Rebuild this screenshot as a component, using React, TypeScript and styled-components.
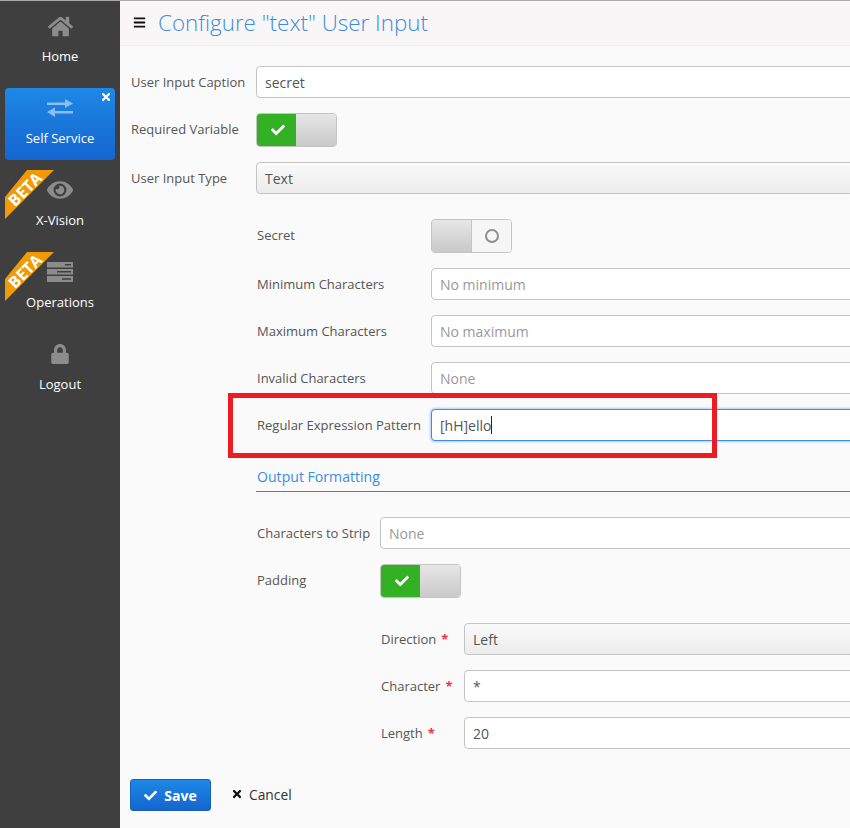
import React from "react";
import styled, { createGlobalStyle } from "styled-components";
import { FaHome, FaEye, FaLock, FaCheck, FaTimes, FaBars } from "react-icons/fa";

const Global = createGlobalStyle`
  html, body { margin: 0; padding: 0; height: 100%; }
  body { font-family: "Open Sans", "Liberation Sans", sans-serif; background: #fafafa; overflow: hidden; }
  * { box-sizing: border-box; }
`;

const Page = styled.div`
  position: relative;
  display: flex;
  width: 850px;
  height: 828px;
  overflow: hidden;
  border-top: 1px solid #aaa;
`;
const Sidebar = styled.nav`
  flex: 0 0 120px;
  display: flex;
  flex-direction: column;
  gap: 10px;
  padding: 5px;
  background: #3f3f3f;
`;
const NavItem = styled.a<{ $active?: boolean }>`
  position: relative;
  display: flex;
  flex-direction: column;
  align-items: center;
  height: 72px;
  padding-top: 9px;
  border-radius: 4px;
  color: #fff;
  font-size: 13px;
  background: ${(p) => (p.$active ? "linear-gradient(#1e88e5, #1565d0)" : "transparent")};
`;
const NavIcon = styled.span<{ $active?: boolean }>`
  display: flex;
  align-items: center;
  justify-content: center;
  height: 22px;
  color: ${(p) => (p.$active ? "#8bbdf0" : "#8c8c8c")};
`;
const NavLabel = styled.span`
  margin-top: 10px;
  line-height: 18px;
`;
const CloseMark = styled.span`
  position: absolute;
  top: 3px;
  right: 3px;
  display: flex;
  color: #fff;
`;
const Ribbon = styled.span`
  position: absolute;
  top: 0;
  left: 0;
  width: 49px;
  height: 49px;
  background: #f29a05;
  clip-path: polygon(22px 0, 49px 0, 0 49px, 0 27px);
`;
const RibbonText = styled.span`
  position: absolute;
  top: 9px;
  left: 0;
  width: 40px;
  text-align: center;
  color: #fff;
  font-size: 16px;
  font-weight: 700;
  line-height: 20px;
  transform: rotate(-45deg);
`;

const Main = styled.main`
  flex: 1;
  min-width: 0;
  display: flex;
  flex-direction: column;
`;
const Header = styled.header`
  display: flex;
  align-items: center;
  gap: 12px;
  height: 45px;
  padding-left: 13px;
  padding-bottom: 1px;
  background: #f8f6f7;
  border-bottom: 1px solid #eee;
  color: #111;
`;
const Title = styled.h1`
  margin: 0;
  font-size: 22.4px;
  font-weight: 300;
  color: #3a8de0;
  line-height: 30px;
`;
const Form = styled.form`
  display: flex;
  flex-direction: column;
  gap: 15px;
  margin-right: -20px;
  padding: 20px 0 0 11px;
`;
const Group = styled.div<{ $indent: number; $top?: number }>`
  display: flex;
  flex-direction: column;
  gap: 15px;
  padding-left: ${(p) => p.$indent}px;
  margin-top: ${(p) => p.$top ?? 0}px;
`;
const Row = styled.div`
  display: flex;
  align-items: center;
`;
const Label = styled.label<{ $width: number; $raised?: boolean }>`
  flex: 0 0 ${(p) => p.$width}px;
  margin-bottom: ${(p) => (p.$raised ? 2 : 0)}px;
  font-size: 13px;
  color: #555;
  white-space: nowrap;
`;
const Required = styled.span`
  margin-left: 5px;
  color: #f0353b;
  font-size: 13px;
  font-weight: 700;
`;
const Input = styled.input`
  flex: 1;
  min-width: 0;
  height: 32px;
  padding: 0 8px;
  border: 1px solid #c4c4c4;
  border-radius: 4px;
  background: #fff;
  font: 14px "Open Sans", sans-serif;
  color: #555;
  &::placeholder { color: #999; opacity: 1; }
`;
const Focused = styled.div`
  flex: 1;
  display: flex;
  align-items: center;
  height: 32px;
  padding: 0 8px;
  border: 1px solid #3d8ee4;
  border-radius: 4px;
  background: #fff;
  box-shadow: 0 0 3px rgba(61, 142, 228, 0.8);
  font-size: 14px;
  color: #555;
`;
const Caret = styled.span`
  width: 1px;
  height: 18px;
  background: #222;
`;
const Select = styled.div`
  flex: 1;
  display: flex;
  align-items: center;
  height: 32px;
  padding: 0 8px;
  border: 1px solid #c4c4c4;
  border-radius: 4px;
  background: linear-gradient(#fafafa, #ececec);
  font-size: 14px;
  color: #555;
`;
const Toggle = styled.div`
  display: flex;
  width: 81px;
  height: 34px;
  border: 1px solid #c4c4c4;
  border-radius: 4px;
  overflow: hidden;
`;
const ToggleOn = styled.span`
  flex: 0 0 39px;
  display: flex;
  align-items: center;
  justify-content: center;
  padding-left: 2px;
  background: #34b024;
  color: #fff;
`;
const ToggleOff = styled.span`
  flex: 1;
  background: linear-gradient(#e6e6e6, #c9c9c9);
`;
const ToggleEmpty = styled.span`
  flex: 0 0 40px;
  display: flex;
  align-items: center;
  justify-content: center;
  background: #f6f6f6;
  border-left: 1px solid #c4c4c4;
`;
const Ring = styled.span`
  width: 14px;
  height: 14px;
  border: 2px solid #8f8f8f;
  border-radius: 50%;
`;
const SectionTitle = styled.div`
  margin: 11px 0 10px -1px;
  padding: 0 0 4px 1px;
  border-bottom: 1px solid #3a7fd0;
  color: #3a8de0;
  font-size: 14.1px;
  line-height: 20px;
`;
const Actions = styled.div`
  display: flex;
  align-items: center;
  gap: 20px;
  margin-top: 15px;
`;
const SaveButton = styled.button`
  display: flex;
  align-items: center;
  justify-content: center;
  gap: 7px;
  width: 81px;
  height: 32px;
  margin-left: -1px;
  border: 1px solid #1560b8;
  border-radius: 3px;
  background: linear-gradient(#1e88e5, #1565d0);
  color: #fff;
  font: 700 14px "Open Sans", sans-serif;
`;
const CancelLink = styled.a`
  display: flex;
  align-items: center;
  gap: 6px;
  margin-bottom: 2px;
  color: #333;
  font-size: 13.8px;
`;
const CancelMark = styled.span`
  display: flex;
  color: #111;
`;
const Highlight = styled.div`
  position: absolute;
  left: 228px;
  top: 392px;
  width: 489px;
  height: 65px;
  border: 5px solid #ed1c24;
  pointer-events: none;
`;

const Exchange = () => (
  <svg width="26" height="18" viewBox="0 0 26 18" fill="currentColor">
    <path d="M0 3.5h18V0l8 4.5-8 4.5V6H0zM26 12H8V8.5L0 13l8 5v-3.5h18z" />
  </svg>
);

const ServerStack = () => (
  <svg width="26" height="20" viewBox="0 0 26 20" fill="currentColor" fillRule="evenodd">
    <path d="M0 0h26v5.5H0zM18 2v1.5h6V2z" />
    <path d="M0 7h26v5.5H0zM10 9v1.5h14V9z" />
    <path d="M0 14h26v6H0zM15 16.2v1.5h9v-1.5z" />
  </svg>
);

const OnSwitch = () => (
  <Toggle>
    <ToggleOn><FaCheck size={14} /></ToggleOn>
    <ToggleOff />
  </Toggle>
);

export default function App() {
  return (
    <Page>
      <Global />
      <Sidebar>
        <NavItem>
          <NavIcon><FaHome size={25} /></NavIcon>
          <NavLabel>Home</NavLabel>
        </NavItem>
        <NavItem $active>
          <NavIcon $active><Exchange /></NavIcon>
          <NavLabel>Self Service</NavLabel>
          <CloseMark><FaTimes size={12} /></CloseMark>
        </NavItem>
        <NavItem>
          <NavIcon><FaEye size={26} /></NavIcon>
          <NavLabel>X-Vision</NavLabel>
          <Ribbon />
          <RibbonText>BETA</RibbonText>
        </NavItem>
        <NavItem>
          <NavIcon><ServerStack /></NavIcon>
          <NavLabel>Operations</NavLabel>
          <Ribbon />
          <RibbonText>BETA</RibbonText>
        </NavItem>
        <NavItem>
          <NavIcon><FaLock size={20} /></NavIcon>
          <NavLabel>Logout</NavLabel>
        </NavItem>
      </Sidebar>
      <Main>
        <Header>
          <FaBars size={13} />
          <Title>Configure "text" User Input</Title>
        </Header>
        <Form>
          <Row>
            <Label $width={125}>User Input Caption</Label>
            <Input readOnly value="secret" />
          </Row>
          <Row>
            <Label $width={125} $raised>Required Variable</Label>
            <OnSwitch />
          </Row>
          <Row>
            <Label $width={125}>User Input Type</Label>
            <Select>Text</Select>
          </Row>
          <Group $indent={126} $top={10}>
            <Row>
              <Label $width={174} $raised>Secret</Label>
              <Toggle>
                <ToggleOff />
                <ToggleEmpty><Ring /></ToggleEmpty>
              </Toggle>
            </Row>
            <Row>
              <Label $width={174}>Minimum Characters</Label>
              <Input readOnly placeholder="No minimum" />
            </Row>
            <Row>
              <Label $width={174}>Maximum Characters</Label>
              <Input readOnly placeholder="No maximum" />
            </Row>
            <Row>
              <Label $width={174}>Invalid Characters</Label>
              <Input readOnly placeholder="None" />
            </Row>
            <Row>
              <Label $width={174}>Regular Expression Pattern</Label>
              <Focused>[hH]ello<Caret /></Focused>
            </Row>
            <SectionTitle>Output Formatting</SectionTitle>
            <Row>
              <Label $width={123}>Characters to Strip</Label>
              <Input readOnly placeholder="None" />
            </Row>
            <Row>
              <Label $width={123} $raised>Padding</Label>
              <OnSwitch />
            </Row>
            <Group $indent={124} $top={10}>
              <Row>
                <Label $width={83}>Direction<Required>*</Required></Label>
                <Select>Left</Select>
              </Row>
              <Row>
                <Label $width={83}>Character<Required>*</Required></Label>
                <Input readOnly value="*" />
              </Row>
              <Row>
                <Label $width={83}>Length<Required>*</Required></Label>
                <Input readOnly value="20" />
              </Row>
            </Group>
          </Group>
          <Actions>
            <SaveButton type="button"><FaCheck size={13} />Save</SaveButton>
            <CancelLink><CancelMark><FaTimes size={12} /></CancelMark>Cancel</CancelLink>
          </Actions>
        </Form>
      </Main>
      <Highlight />
    </Page>
  );
}
